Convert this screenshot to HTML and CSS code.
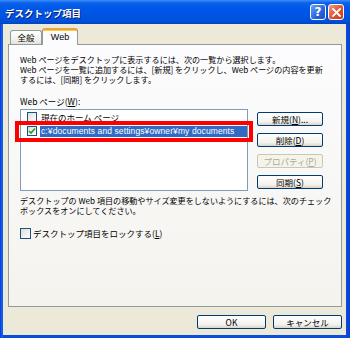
FILE: index.html
```html
<!DOCTYPE html>
<html>
<head lang="ja">
    <meta charset="UTF-8">
    <title>デスクトップ項目</title>
    <link rel="stylesheet" href="styles.css">
</head>
<body>
<div class="window">
    <div class="titlebar">
        <span class="title">デスクトップ項目</span>
        <span class="capbtn help">?</span>
        <span class="capbtn close">
            <svg width="9" height="9" viewBox="0 0 9 9"><path d="M1 1L8 8M8 1L1 8" stroke="#fff" stroke-width="1.8" stroke-linecap="square"/></svg>
        </span>
    </div>
    <div class="client">
        <ul class="tabs">
            <li class="tab">全般</li>
            <li class="tab active">Web</li>
        </ul>
        <div class="panel">
            <p class="text">Web ページをデスクトップに表示するには、次の一覧から選択します。<br>
                Web ページを一覧に追加するには、[新規] をクリックし、Web ページの内容を更新<br>
                するには、[同期] をクリックします。</p>
            <p class="label">Web ページ(<u>W</u>):</p>
            <div class="listrow">
                <div class="listbox">
                    <div class="item"><span class="cb"></span><span class="name">現在のホーム ページ</span></div>
                    <div class="item marked"><span class="cb checked">
                        <svg width="8" height="8" viewBox="0 0 8 8"><path d="M1 4L3 6L7 1.5" fill="none" stroke="#21A121" stroke-width="1.6"/></svg>
                    </span><span class="name selected">c:¥documents and settings¥owner¥my documents</span></div>
                </div>
                <div class="btncol">
                    <span class="btn">新規(<u>N</u>)...</span>
                    <span class="btn">削除(<u>D</u>)</span>
                    <span class="btn disabled">プロパティ(<u>P</u>)</span>
                    <span class="btn">同期(<u>S</u>)</span>
                </div>
            </div>
            <p class="text note">デスクトップの Web 項目の移動やサイズ変更をしないようにするには、次のチェック<br>
                ボックスをオンにしてください。</p>
            <div class="lock"><span class="cb big"></span><span>デスクトップ項目をロックする(<u>L</u>)</span></div>
        </div>
        <div class="footer">
            <span class="btn wide">OK</span>
            <span class="btn wide">キャンセル</span>
        </div>
    </div>
</div>
</body>
</html>
```

FILE: styles.css
```css
*{
    margin: 0;
    padding: 0;
    box-sizing: border-box;
}
body{
    font-family: "Noto Sans CJK JP", "Noto Sans", sans-serif;
    font-size: 8.5px;
    color: #000;
    background: #fff;
}
ul,li{
    list-style: none;
}
u{
    text-decoration: underline;
}
.window{
    width: 350px;
    height: 338px;
    display: flex;
    flex-direction: column;
    background: linear-gradient(90deg, #0831D9 0, #166AEE 2px, #0A4CE0 3px, #0A4CE0 346px, #0B3FD0 350px);
}
.titlebar{
    height: 24px;
    display: flex;
    align-items: center;
    padding: 0 6px 0 5px;
    gap: 2px;
    background: linear-gradient(#3D8DF8 0, #0A61EB 3px, #0058E8 8px, #0054E3 16px, #0050DA 21px, #0043C0 24px);
}
.title{
    flex: 1;
    color: #fff;
    font-size: 9.5px;
    font-weight: bold;
    text-shadow: 1px 1px 0 #0A1C6E;
    padding-top: 1px;
}
.capbtn{
    width: 16px;
    height: 16px;
    border: 1px solid #fff;
    border-radius: 3px;
    display: flex;
    align-items: center;
    justify-content: center;
    color: #fff;
    font-family: "DejaVu Sans", sans-serif;
    font-weight: bold;
    font-size: 12px;
}
.help{
    background: linear-gradient(135deg, #6FA2F8, #2663E0 60%, #1A4FCA);
}
.close{
    background: linear-gradient(135deg, #F39C7E, #E2512E 55%, #C83A16);
}
.client{
    flex: 1;
    margin: 0 4px 3px 3px;
    background: #ECE9D8;
    padding: 0 4px 0 5px;
    display: flex;
    flex-direction: column;
}
.tabs{
    height: 20px;
    display: flex;
    align-items: flex-end;
    padding-left: 2px;
    position: relative;
    z-index: 1;
}
.tab{
    height: 14px;
    width: 32px;
    border: 1px solid #919B9C;
    border-bottom: none;
    border-radius: 3px 3px 0 0;
    background: linear-gradient(#FFFFFF, #F3F2EE 60%, #E4E2D8);
    text-align: center;
    line-height: 13px;
    font-size: 8.5px;
}
.tab.active{
    width: 36px;
    height: 17px;
    margin-bottom: -1px;
    border-top: 2px solid #E8A33B;
    box-shadow: inset 0 1px 0 #FFC83C;
    background: #FCFCFE;
    line-height: 15px;
    font-family: "Liberation Sans", sans-serif;
    font-size: 9px;
}
.panel{
    height: 263px;
    border: 1px solid #919B9C;
    background: linear-gradient(#FCFCFE, #F4F3EE);
    padding: 10px 0 0 11px;
}
.text{
    font-size: 8.1px;
    line-height: 10px;
    white-space: nowrap;
}
.label{
    margin-top: 11px;
    line-height: 10px;
}
.listrow{
    display: flex;
    gap: 9px;
    margin-top: 3px;
}
.listbox{
    width: 228px;
    height: 82px;
    border: 1px solid #7F9DB9;
    background: #fff;
    padding-left: 6px;
    flex-shrink: 0;
}
.item{
    width: 220px;
    height: 14px;
    display: flex;
    align-items: center;
    gap: 3px;
    white-space: nowrap;
}
.item.marked{
    position: relative;
}
.item.marked::after{
    content: "";
    position: absolute;
    left: -12px;
    right: -6px;
    top: -3px;
    bottom: -4px;
    border: 4px solid #FF0000;
}
.cb{
    width: 10px;
    height: 10px;
    border: 1px solid #1C5180;
    background: linear-gradient(135deg, #DCDCD7, #F6F6F4 70%, #FFFFFF);
    display: flex;
    align-items: center;
    justify-content: center;
    flex-shrink: 0;
}
.cb.big{
    width: 11px;
    height: 11px;
}
.name{
    line-height: 11px;
    padding: 0 1px;
}
.selected{
    background: #316AC5;
    color: #fff;
    flex: 1;
    min-width: 0;
    overflow: hidden;
    font-family: "Liberation Sans", sans-serif;
    font-size: 8.5px;
    letter-spacing: 0.1px;
}
.btncol{
    display: flex;
    flex-direction: column;
    gap: 7px;
    padding-top: 3px;
}
.btn{
    width: 66px;
    height: 14px;
    border: 1px solid #003C74;
    border-radius: 2px;
    background: linear-gradient(#FFFFFF, #F4F3EE 70%, #D9D5CA);
    display: flex;
    align-items: center;
    justify-content: center;
    line-height: 12px;
}
.btn.disabled{
    border-color: #C9C7BA;
    background: #F5F4EA;
    color: #ACA899;
}
.note{
    margin-top: 5px;
}
.lock{
    margin-top: 11px;
    height: 12px;
    display: flex;
    align-items: center;
    gap: 2px;
}
.footer{
    display: flex;
    justify-content: flex-end;
    gap: 7px;
    padding-top: 8px;
}
.btn.wide{
    width: 69px;
}
```
